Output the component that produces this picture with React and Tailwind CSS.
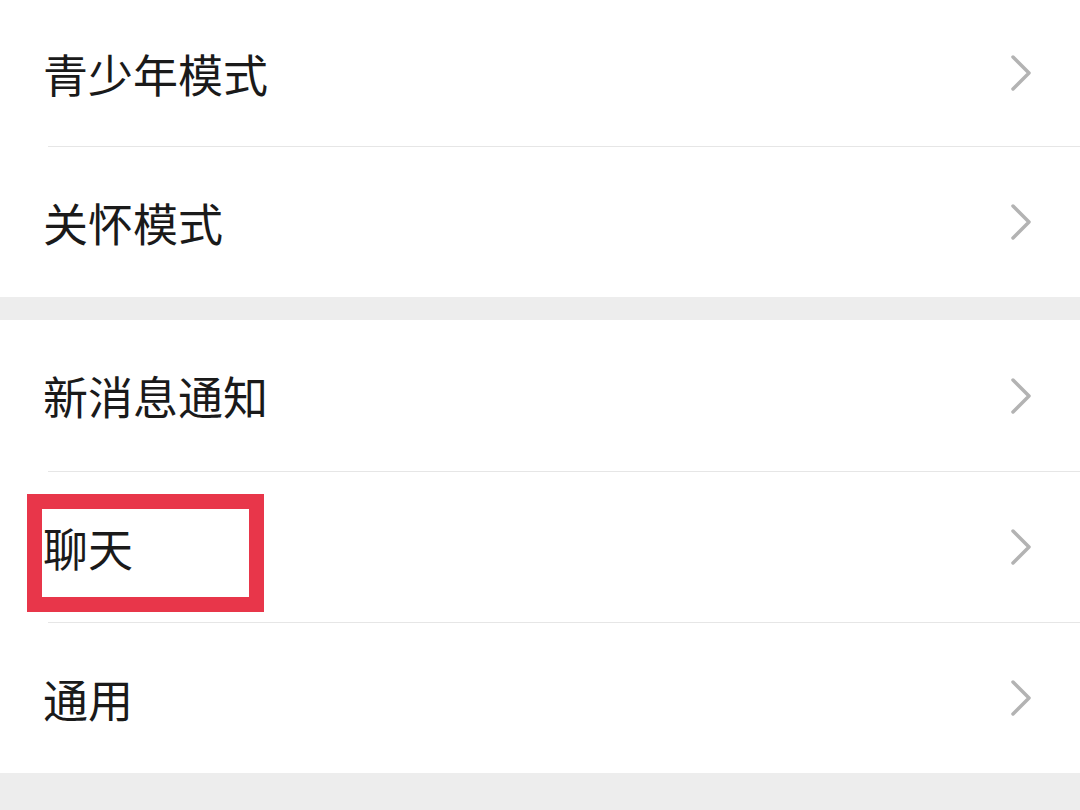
import React from 'react';

function Chevron() {
  return (
    <svg width="26" height="38" viewBox="0 0 26 38" fill="none" className="shrink-0">
      <path d="M4 3 L20 19 L4 35" stroke="#b3b3b3" strokeWidth="3.5" strokeLinecap="round" strokeLinejoin="round" />
    </svg>
  );
}

function Row({ label, height, divider, highlight }) {
  return (
    <div className="relative bg-white">
      <div className={`flex items-center justify-between pl-[43px] pr-[45px] ${height}`}>
        <span className="text-[45px] leading-none text-[#1a1a1a]">{label}</span>
        <Chevron />
      </div>
      {divider && <div className="ml-[48px] h-px bg-[#e6e6e6]" />}
      {highlight && (
        <div className="absolute left-[27px] top-[22px] w-[237px] h-[118px] border-[15px] border-[#e8364a]" />
      )}
    </div>
  );
}

export default function App() {
  return (
    <div className="w-[1080px] h-[810px] overflow-hidden bg-[#ededed] font-['Noto_Sans_CJK_SC','Noto_Sans',sans-serif]">
      <div className="bg-white">
        <Row label="青少年模式" height="h-[146px]" divider />
        <Row label="关怀模式" height="h-[150px]" />
      </div>
      <div className="h-[23px] bg-[#ededed]" />
      <div className="bg-white">
        <Row label="新消息通知" height="h-[151px]" divider />
        <Row label="聊天" height="h-[150px]" divider highlight />
        <Row label="通用" height="h-[150px]" />
      </div>
    </div>
  );
}
